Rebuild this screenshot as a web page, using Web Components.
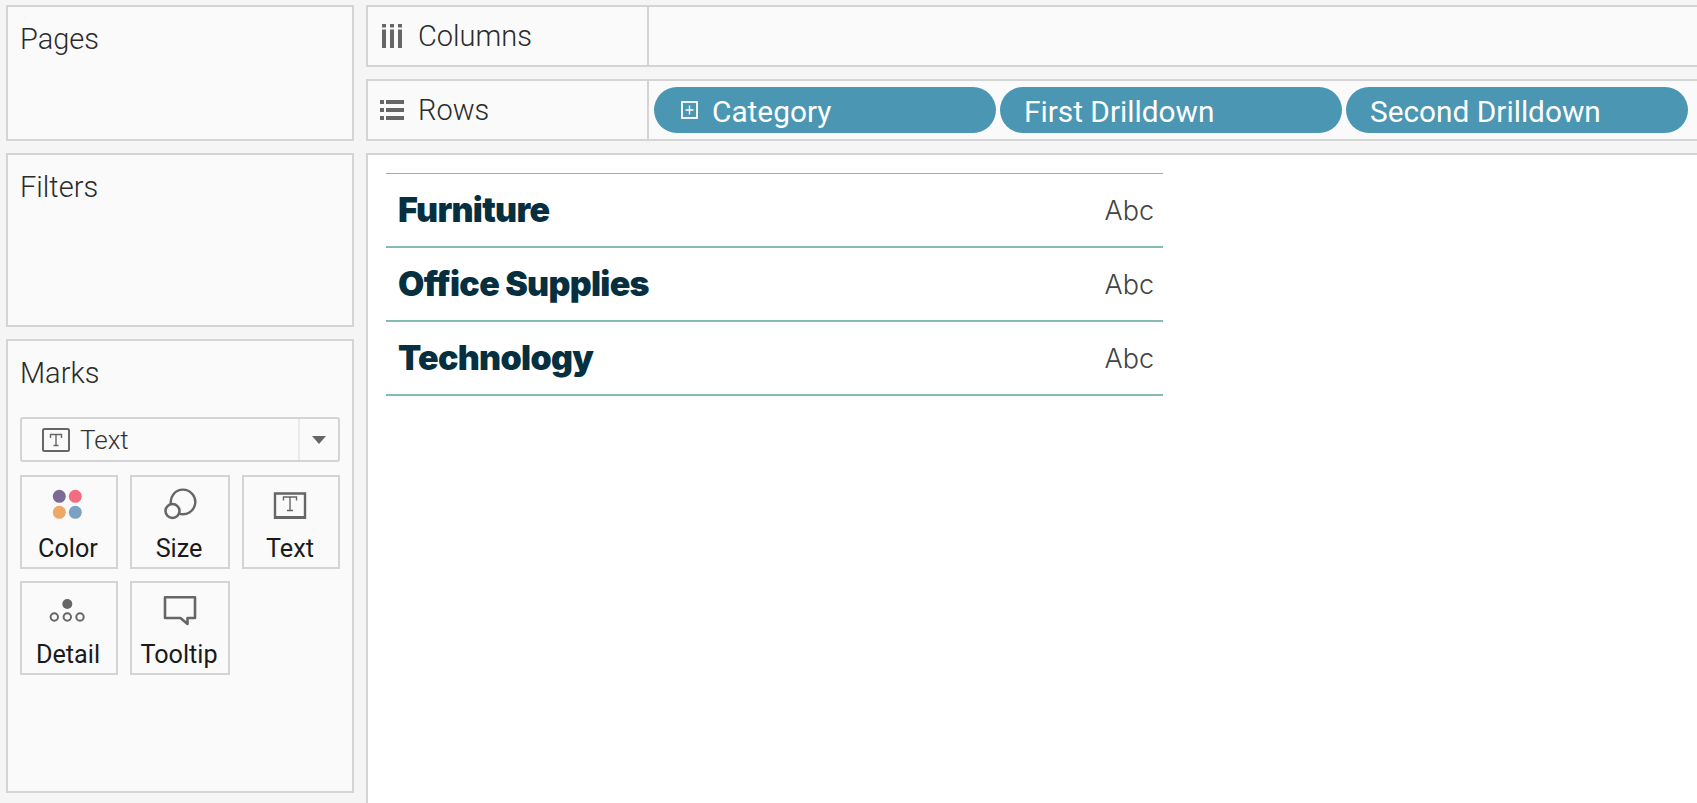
<!DOCTYPE html>
<html lang="en">
<head>
  <meta charset="UTF-8">
  <title>Drilldown sheet</title>
  <style>
    html, body { margin: 0; height: 100%; }
    body {
      background: #f5f5f5;
      font-family: Roboto, "Liberation Sans", sans-serif;
      overflow: hidden;
    }
  </style>
</head>
<body>
  <sheet-layout>
    <side-card slot="pages" heading="Pages" style="height:136px"></side-card>
    <side-card slot="filters" heading="Filters" style="height:174px"></side-card>
    <side-card slot="marks" heading="Marks" style="height:454px">
      <marks-select>
        <svg slot="icon" width="28" height="24" viewBox="0 0 28 24">
          <rect x="1" y="1" width="26" height="22" rx="1.5" fill="none" stroke="#666" stroke-width="2"/>
          <path d="M8.500 10V6.500h11V10M14 6.500v11M11.500 17.500h5" fill="none" stroke="#666" stroke-width="1.400"/>
        </svg>
        <span style="padding-top:1px">Text</span>
      </marks-select>
      <marks-grid>
        <mark-button label="Color">
          <svg slot="icon" width="94" height="46" viewBox="0 0 94 46">
            <circle cx="37.300" cy="19.300" r="6.500" fill="#7b6a96"/>
            <circle cx="53.300" cy="19.300" r="6.500" fill="#f36c80"/>
            <circle cx="37.300" cy="35.300" r="6.500" fill="#eda766"/>
            <circle cx="53.300" cy="35.300" r="6.500" fill="#7aa2c4"/>
          </svg>
        </mark-button>
        <mark-button label="Size">
          <svg slot="icon" width="96" height="46" viewBox="0 0 96 46">
            <path d="M38.900 27.200A12.300 12.300 0 1 1 47 36.600" fill="none" stroke="#666" stroke-width="2.400"/>
            <circle cx="40.500" cy="34" r="7" fill="none" stroke="#666" stroke-width="2.600"/>
          </svg>
        </mark-button>
        <mark-button label="Text">
          <svg slot="icon" width="94" height="46" viewBox="0 0 94 46">
            <path d="M31 16.500h30v24h-30z" fill="none" stroke="#666" stroke-width="2.400"/>
            <path d="M30 40.500h32" stroke="#666" stroke-width="3"/>
            <path d="M39.500 23.500v-3.500h13v3.500M46 20v13.500M43 33.500h6" fill="none" stroke="#666" stroke-width="1.400"/>
          </svg>
        </mark-button>
        <mark-button label="Detail">
          <svg slot="icon" width="94" height="46" viewBox="0 0 94 46">
            <circle cx="45.300" cy="21" r="5" fill="#666"/>
            <circle cx="32.300" cy="34" r="3.700" fill="none" stroke="#666" stroke-width="2"/>
            <circle cx="45.300" cy="34" r="3.700" fill="none" stroke="#666" stroke-width="2"/>
            <circle cx="58" cy="34" r="3.700" fill="none" stroke="#666" stroke-width="2"/>
          </svg>
        </mark-button>
        <mark-button label="Tooltip">
          <svg slot="icon" width="96" height="46" viewBox="0 0 96 46">
            <path d="M33 14.200h30v20.800h-7.500v6l-7-6H33z" fill="none" stroke="#666" stroke-width="2.600" stroke-linejoin="round"/>
          </svg>
        </mark-button>
      </marks-grid>
    </side-card>

    <shelf-row slot="columns" label="Columns">
      <svg slot="icon" width="20" height="24" viewBox="0 0 20 24">
        <path d="M0 0h4v3.500H0zM0 5.500h4V24H0zM8 0h4v3.500H8zM8 5.500h4V24H8zM16 0h4v3.500h-4zM16 5.500h4V24h-4z" fill="#666"/>
      </svg>
    </shelf-row>
    <shelf-row slot="rows" label="Rows">
      <svg slot="icon" width="24" height="20" viewBox="0 0 24 20">
        <path d="M0 0h4v4H0zM6 0h18v4H6zM0 8h4v4H0zM6 8h18v4H6zM0 16h4v4H0zM6 16h18v4H6z" fill="#666"/>
      </svg>
      <field-pill expandable>Category</field-pill>
      <field-pill>First Drilldown</field-pill>
      <field-pill>Second Drilldown</field-pill>
    </shelf-row>

    <viz-view slot="view">
      <viz-row name="Furniture"></viz-row>
      <viz-row name="Office Supplies"></viz-row>
      <viz-row name="Technology"></viz-row>
    </viz-view>
  </sheet-layout>

  <script>
    (function() {
      function define(tag, html, init) {
        customElements.define(tag, class extends HTMLElement {
          constructor() {
            super();
            this.attachShadow({mode: 'open'});
            this.shadowRoot.innerHTML = html;
          }
          connectedCallback() {
            if (init) init(this);
          }
        });
      }

      define('sheet-layout', `
        <style>
          :host {
            display: grid;
            grid-template-columns: 348px 1fr;
            column-gap: 12px;
            padding: 5px 0 0 6px;
            height: 798px;
            overflow: hidden;
          }
          .side { display: flex; flex-direction: column; gap: 12px; }
          .main { display: flex; flex-direction: column; gap: 12px; }
          .shelves { display: flex; flex-direction: column; gap: 12px; }
          ::slotted([slot=view]) { flex: 1; }
        </style>
        <div class="side">
          <slot name="pages"></slot>
          <slot name="filters"></slot>
          <slot name="marks"></slot>
        </div>
        <div class="main">
          <div class="shelves">
            <slot name="columns"></slot>
            <slot name="rows"></slot>
          </div>
          <slot name="view"></slot>
        </div>
      `);

      define('side-card', `
        <style>
          :host {
            display: block;
            box-sizing: border-box;
            background: #fafafa;
            border: 2px solid #d4d4d4;
            padding: 15px 12px 0 12px;
          }
          h2 {
            margin: 0 0 27px;
            font: 300 29px/34px Roboto, "Liberation Sans", sans-serif;
            color: #2b2b2b;
          }
        </style>
        <h2></h2>
        <slot></slot>
      `, el => {
        el.shadowRoot.querySelector('h2').textContent = el.getAttribute('heading');
      });

      define('marks-select', `
        <style>
          :host {
            display: flex;
            align-items: center;
            box-sizing: border-box;
            width: 320px;
            height: 45px;
            margin-bottom: 13px;
            background: #fafafa;
            border: 2px solid #d4d4d4;
            border-radius: 3px;
            font: 300 26px Roboto, "Liberation Sans", sans-serif;
            color: #333;
          }
          .label { flex: 1; display: flex; align-items: center; gap: 10px; padding-left: 20px; }
          .caret {
            width: 38px;
            align-self: stretch;
            display: flex;
            align-items: center;
            justify-content: center;
            border-left: 2px solid #eaeaea;
          }
          .caret i {
            border: 7px solid transparent;
            border-top: 8px solid #666;
            border-bottom: 0;
          }
        </style>
        <div class="label"><slot name="icon"></slot><slot></slot></div>
        <div class="caret"><i></i></div>
      `);

      define('marks-grid', `
        <style>
          :host {
            display: grid;
            grid-template-columns: 98px 100px 98px;
            grid-auto-rows: 94px;
            gap: 12px;
          }
        </style>
        <slot></slot>
      `);

      define('mark-button', `
        <style>
          :host {
            display: flex;
            flex-direction: column;
            align-items: center;
            box-sizing: border-box;
            border: 2px solid #d4d4d4;
            background: #fafafa;
            font: 400 25.200px Roboto, "Liberation Sans", sans-serif;
            color: #1a1a1a;
          }
          .icon { height: 46px; }
          ::slotted(svg) { display: block; }
          .label { line-height: 34px; margin-top: 8.500px; margin-right: 2px; }
        </style>
        <div class="icon"><slot name="icon"></slot></div>
        <div class="label"></div>
      `, el => {
        el.shadowRoot.querySelector('.label').textContent = el.getAttribute('label');
      });

      define('shelf-row', `
        <style>
          :host {
            display: flex;
            box-sizing: border-box;
            height: 62px;
            background: #fafafa;
            border: 2px solid #d4d4d4;
            border-right: 0;
          }
          .head {
            box-sizing: border-box;
            width: 281px;
            flex: none;
            display: flex;
            align-items: center;
            border-right: 2px solid #d4d4d4;
            font: 300 29px Roboto, "Liberation Sans", sans-serif;
            color: #2b2b2b;
          }
          .ico { width: 52px; margin-left: -2px; display: flex; justify-content: center; flex: none; }
          ::slotted(svg) { display: block; }
          .pills { display: flex; align-items: center; gap: 4px; padding-left: 5px; }
        </style>
        <div class="head"><div class="ico"><slot name="icon"></slot></div><span class="lbl"></span></div>
        <div class="pills"><slot></slot></div>
      `, el => {
        el.shadowRoot.querySelector('.lbl').textContent = el.getAttribute('label');
      });

      define('field-pill', `
        <style>
          :host {
            display: flex;
            align-items: center;
            box-sizing: border-box;
            width: 342px;
            height: 46px;
            padding: 2px 0 0 24px;
            background: #4a96b3;
            border-radius: 23px;
            color: #fff;
            font: 400 29.800px Roboto, "Liberation Sans", sans-serif;
          }
          svg { display: none; margin: -2px 14px 0 0; }
          :host([expandable]) svg { display: block; }
          :host([expandable]) { padding-left: 27px; }
        </style>
        <svg width="17" height="18" viewBox="0 0 17 18">
          <rect x="1" y="1" width="15" height="16" fill="none" stroke="#fff" stroke-width="1.800"/>
          <path d="M8.500 4.500v9M4.500 9h8" stroke="#fff" stroke-width="1.400"/>
        </svg>
        <slot></slot>
      `);

      define('viz-view', `
        <style>
          :host {
            display: block;
            box-sizing: border-box;
            background: #fff;
            border-top: 2px solid #d4d4d4;
            border-left: 2px solid #d4d4d4;
            padding: 18px 0 0 18px;
          }
          .table { width: 777px; border-top: 1px solid #85bbb2; }
        </style>
        <div class="table"><slot></slot></div>
      `);

      define('viz-row', `
        <style>
          :host {
            display: flex;
            align-items: center;
            justify-content: space-between;
            box-sizing: border-box;
            height: 74px;
            padding: 0 9px 2px 12px;
            border-bottom: 2px solid #85bbb2;
          }
          .name {
            font: 900 34px Inter, "Liberation Sans", sans-serif;
            letter-spacing: -0.7px;
            color: #06303f;
          }
          .mark {
            margin-top: 2px;
            font: 300 27px Inter, "Liberation Sans", sans-serif;
            color: #444;
          }
        </style>
        <span class="name"></span><span class="mark">Abc</span>
      `, el => {
        el.shadowRoot.querySelector('.name').textContent = el.getAttribute('name');
      });
    })()
  </script>
</body>
</html>
